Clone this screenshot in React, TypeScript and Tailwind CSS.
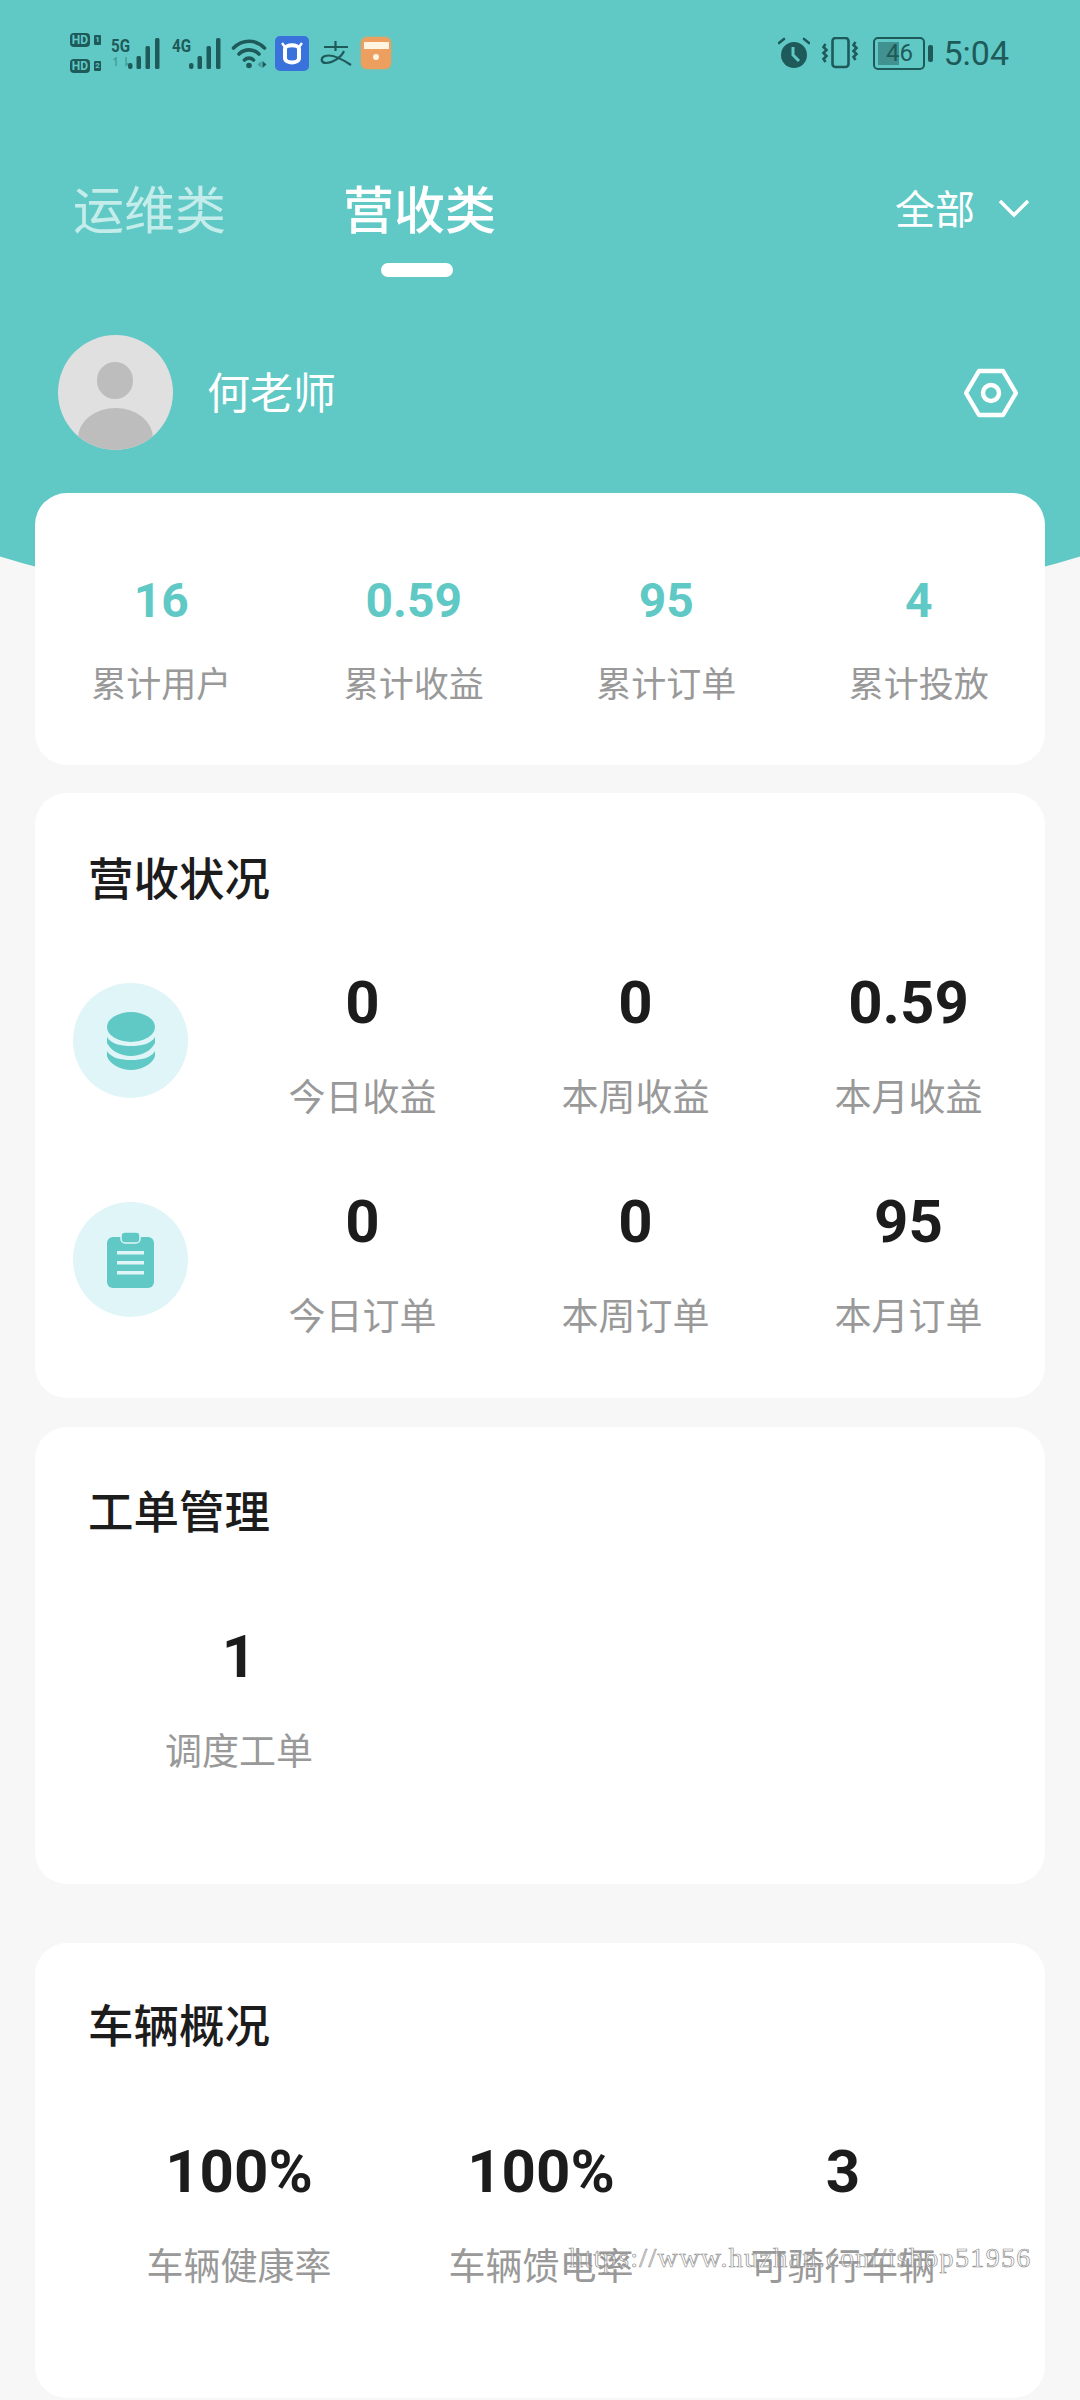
// Operations dashboard screen: revenue tab with stat cards
import React from 'react';

const cjk = "font-['Roboto','Noto_Sans_CJK_SC',sans-serif]";

// Status bar signal bars
const Signal = () => (
  <svg width="32" height="31" viewBox="0 0 32 31" fill="#1f5a5a">
    <rect x="0" y="25" width="4.5" height="6" rx="2" />
    <rect x="8.5" y="18" width="4.5" height="13" rx="1.5" />
    <rect x="17.5" y="8" width="4.5" height="23" rx="1.5" />
    <rect x="27" y="0" width="4.5" height="31" rx="1.5" />
  </svg>
);

// Left half of the status bar
const StatusLeft = () => (
  <div className="flex items-center h-[40px]">
    <div className="flex flex-col gap-[12px] w-[41px]">
      {['1', '2'].map((n) => (
        <div key={n} className="flex items-center gap-[4px]">
          <span className="w-[20px] h-[14px] rounded-[4px] bg-[#1f5a5a] text-[#60c9c5] text-[12px] leading-[14px] text-center font-bold font-['Roboto',sans-serif]">HD</span>
          <span className="w-[7px] h-[10px] rounded-[1px] bg-[#1f5a5a] text-[#60c9c5] text-[8px] leading-[10px] text-center font-bold font-['Roboto',sans-serif]">{n}</span>
        </div>
      ))}
    </div>
    <div className="relative h-[31px] w-[49px]">
      <span className="absolute left-0 top-0 origin-left scale-x-[0.8] text-[#1f5a5a] text-[19px] leading-[15px] font-bold font-['Roboto',sans-serif]">5G</span>
      <span className="absolute left-0 bottom-[1px] text-[#1f5a5a]/40 text-[12px] leading-[12px] font-bold font-['Roboto',sans-serif]">↿⇂</span>
      <div className="absolute right-0 bottom-0 flex"><Signal /></div>
    </div>
    <div className="relative ml-[12px] h-[31px] w-[49px]">
      <span className="absolute left-0 top-0 origin-left scale-x-[0.8] text-[#1f5a5a] text-[19px] leading-[15px] font-bold font-['Roboto',sans-serif]">4G</span>
      <div className="absolute right-0 bottom-0 flex"><Signal /></div>
    </div>
    <svg width="37" height="32" viewBox="0 0 36 32" fill="none" stroke="#1f5a5a" strokeWidth="3.6" strokeLinecap="round" className="ml-[10px]">
      <path d="M2 11 C11 2 24 2 33 11" />
      <path d="M7.5 17 C13 11.5 22 11.5 27.5 17" />
      <path d="M13 23 C15.5 20.5 19.5 20.5 22 23" />
      <circle cx="17.5" cy="28.5" r="2.8" fill="#1f5a5a" stroke="none" />
      <path d="M30 24 v7 l-4 -3.5z" fill="#1f5a5a" fillOpacity="0.4" stroke="none" />
      <path d="M31 24 l4 3.5 -4 3.5z" fill="#1f5a5a" stroke="none" />
    </svg>
    <div className="ml-[7px] w-[34px] h-[35px] rounded-[5px] bg-[#3a72dc] flex items-center justify-center">
      <svg width="24" height="26" viewBox="0 0 24 26" fill="none">
        <path d="M5 9 C5 4 19 4 19 9 V18 C19 24 5 24 5 18 Z" stroke="#fff" strokeWidth="4" />
        <path d="M2 3 L5 7 M22 3 L19 7" stroke="#fff" strokeWidth="2.5" />
      </svg>
    </div>
    <svg width="32" height="26" viewBox="0 0 32 26" fill="none" stroke="#1f5a5a" strokeWidth="2.2" className="ml-[11px]">
      <path d="M4 7 H28 M15.5 1 V11 M24 11 C21 18 12 23 6 23 C1 23 0 18 5 16 C11 14 22 19 31 25" />
    </svg>
    <div className="ml-[9px] w-[30px] h-[32px] rounded-[6px] bg-[#ec9f5e] overflow-hidden flex flex-col pt-[5px] items-center shadow-[0_0_2px_#e8a066]">
      <div className="w-[25px] h-[7px] bg-[#fff3e2]" />
      <div className="mt-[5px] w-[6px] h-[6px] rounded-full bg-[#fff3e2]" />
    </div>
  </div>
);

// Right half of the status bar
const StatusRight = () => (
  <div className="flex items-center h-[40px]">
    <svg width="32" height="32" viewBox="0 0 32 32">
      <circle cx="16" cy="18" r="13" fill="#1f5a5a" />
      <path d="M15 10 V18 L21 24" stroke="#60c9c5" strokeWidth="3" fill="none" />
      <path d="M1 6 L6 2 M31 6 L26 2" stroke="#1f5a5a" strokeWidth="2.6" strokeLinecap="round" />
    </svg>
    <svg width="39" height="32" viewBox="0 0 38 32" fill="none" stroke="#1f5a5a" strokeWidth="2.6" className="ml-[11px]">
      <rect x="11" y="1" width="16" height="29" rx="3" />
      <path d="M4 7 l-2 3 3 3 -3 3 3 3 -3 3 2 3" />
      <path d="M34 5 l-2 3 3 3 -3 3 3 3 -3 3 2 3" />
    </svg>
    <div className="ml-[13px] relative w-[52px] h-[33px] rounded-[5px] border-[2.5px] border-[#1f5a5a] overflow-hidden">
      <div className="absolute left-[3px] top-[3px] bottom-[3px] w-[21px] bg-[#1f5a5a]/50" />
      <span className="absolute inset-0 text-center text-[#1f5a5a] text-[24px] leading-[28px] font-['Roboto',sans-serif]">46</span>
    </div>
    <div className="ml-[3px] w-[5px] h-[17px] rounded-[2px] bg-[#1f5a5a]" />
    <span className="ml-[10px] text-[#1f5a5a] text-[34px] leading-[40px] font-['Roboto',sans-serif]">5:04</span>
  </div>
);

// Number + caption, used by every stat grid
const Stat = ({ value, label, color = 'text-[#1c1c1c]' }: { value: string; label: string; color?: string }) => (
  <div className="flex flex-col items-center">
    <span className={`${color} text-[60px] leading-[70px] font-bold font-['Roboto',sans-serif]`}>{value}</span>
    <span className="mt-[36px] text-[#999] text-[37px] leading-[50px]">{label}</span>
  </div>
);

const Title = ({ children }: { children: React.ReactNode }) => (
  <h2 className="text-[45.5px] leading-[60px] text-[#1c1c1c] font-medium">{children}</h2>
);

const CoinsIcon = () => (
  <svg width="48" height="58" viewBox="0 0 48 58" fill="#60c9c5">
    <ellipse cx="24" cy="15" rx="24" ry="15" />
    <path d="M0 25 C4 32 14 34 24 34 C34 34 44 32 48 25 V31 C44 39 34 44 24 44 C14 44 4 39 0 31 Z" />
    <path d="M0 39 C4 46 14 48 24 48 C34 48 44 46 48 39 V44 C46 52 34 58 24 58 C14 58 2 52 0 44 Z" />
  </svg>
);

const ClipboardIcon = () => (
  <svg width="48" height="56" viewBox="0 0 48 56" fill="#60c9c5">
    <rect x="0" y="5" width="47" height="51" rx="6" />
    <rect x="14" y="0" width="19" height="11" rx="4" stroke="#e0f5f7" strokeWidth="1.5" />
    <rect x="10" y="19" width="27" height="3.5" fill="#e0f5f7" />
    <rect x="10" y="29" width="27" height="3.5" fill="#e0f5f7" />
    <rect x="10" y="39" width="27" height="3.5" fill="#e0f5f7" />
  </svg>
);

// Icon disc on the left, three stats on the right
const MetricRow = ({ icon, items }: { icon: React.ReactNode; items: [string, string][] }) => (
  <div className="flex items-center">
    <div className="ml-[38px] mb-[11px] w-[115px] h-[115px] rounded-full bg-[#e0f5f7] flex items-center justify-center">{icon}</div>
    <div className="ml-[38px] flex-1 grid grid-cols-3">
      {items.map(([v, l]) => (
        <Stat key={l} value={v} label={l} />
      ))}
    </div>
  </div>
);

export default function App() {
  return (
    <div className={`relative h-[2400px] w-[1080px] overflow-hidden bg-[#f7f7f7] ${cjk}`}>
      {/* Curved teal backdrop */}
      <div className="absolute left-[-160px] top-0 w-[1400px] h-[622px] bg-[#60c9c5] rounded-b-[700px_180px]" />

      <div className="relative">
        <header className="h-[493px] flex flex-col">
          <div className="flex justify-between pt-[33px] pl-[70px] pr-[71px]">
            <StatusLeft />
            <StatusRight />
          </div>
          {/* Tabs */}
          <div className="mt-[109px] flex items-start pl-[73px] pr-[50px]">
            <span className="text-[51px] leading-[60px] text-[#c3ecea]">运维类</span>
            <div className="ml-[117px] flex flex-col items-center">
              <span className="text-[51px] leading-[60px] text-white font-medium">营收类</span>
              <div className="mt-[21px] mr-[5px] w-[72px] h-[14px] rounded-full bg-white" />
            </div>
            <div className="ml-auto flex items-center mt-[7px]">
              <span className="text-[40px] leading-[44px] text-white">全部</span>
              <svg width="32" height="20" viewBox="0 0 32 20" fill="none" stroke="#fff" strokeWidth="3.5" className="ml-[23px] mb-[4px]">
                <path d="M2 2 L16 16 L30 2" />
              </svg>
            </div>
          </div>
          {/* User row */}
          <div className="mt-[58px] flex items-center pl-[58px] pr-[62px]">
            <div className="relative w-[115px] h-[115px] rounded-full bg-[#e0e0e0] overflow-hidden">
              <div className="absolute left-[39px] top-[27px] w-[36px] h-[37px] rounded-full bg-[#bdbdbd]" />
              <div className="absolute left-[20px] top-[73px] w-[75px] h-[60px] rounded-[50%] bg-[#bdbdbd]" />
            </div>
            <span className="ml-[34px] mb-[-2px] text-[43px] leading-[50px] text-white">何老师</span>
            <svg width="54" height="50" viewBox="0 0 54 50" fill="none" stroke="#fff" strokeWidth="4.4" strokeLinejoin="round" className="ml-auto">
              <path d="M15 3 H39 L52 25 L39 47 H15 L2 25 Z" />
              <circle cx="27" cy="25" r="8" />
            </svg>
          </div>
        </header>

        <main className="px-[35px]">
          {/* Totals */}
          <section className="h-[272px] rounded-[32px] bg-white grid grid-cols-4 pt-[80px] content-start">
            {[
              ['16', '累计用户'],
              ['0.59', '累计收益'],
              ['95', '累计订单'],
              ['4', '累计投放'],
            ].map(([v, l]) => (
              <div key={l} className="flex flex-col items-center">
                <span className="text-[#60c9c5] text-[48px] leading-[56px] font-bold font-['Roboto',sans-serif]">{v}</span>
                <span className="mt-[35px] text-[#999] text-[35px] leading-[44px]">{l}</span>
              </div>
            ))}
          </section>

          {/* Revenue */}
          <section className="mt-[28px] h-[605px] rounded-[32px] bg-white pt-[58px]">
            <div className="pl-[53px]"><Title>营收状况</Title></div>
            <div className="mt-[57px] flex flex-col gap-[63px]">
              <MetricRow icon={<CoinsIcon />} items={[['0', '今日收益'], ['0', '本周收益'], ['0.59', '本月收益']]} />
              <MetricRow icon={<ClipboardIcon />} items={[['0', '今日订单'], ['0', '本周订单'], ['95', '本月订单']]} />
            </div>
          </section>

          {/* Work orders */}
          <section className="mt-[29px] h-[457px] rounded-[32px] bg-white pt-[57px] pl-[53px]">
            <Title>工单管理</Title>
            <div className="mt-[78px] grid grid-cols-3 w-[906px]">
              <Stat value="1" label="调度工单" />
            </div>
          </section>

          {/* Vehicles */}
          <section className="mt-[59px] h-[455px] rounded-[32px] bg-white pt-[55px] pl-[53px]">
            <Title>车辆概况</Title>
            <div className="mt-[79px] grid grid-cols-3 w-[906px]">
              <Stat value="100%" label="车辆健康率" />
              <Stat value="100%" label="车辆馈电率" />
              <Stat value="3" label="可骑行车辆" />
            </div>
          </section>
        </main>
      </div>

      {/* Watermark over the page */}
      <span className="absolute left-[569px] top-[2240px] text-[28px] leading-[36px] tracking-[1.35px] whitespace-nowrap text-white/40 [-webkit-text-stroke:0.7px_#8f8f8f] font-['Liberation_Serif',serif]">https://www.huzhan.com/ishop51956</span>
    </div>
  );
}
